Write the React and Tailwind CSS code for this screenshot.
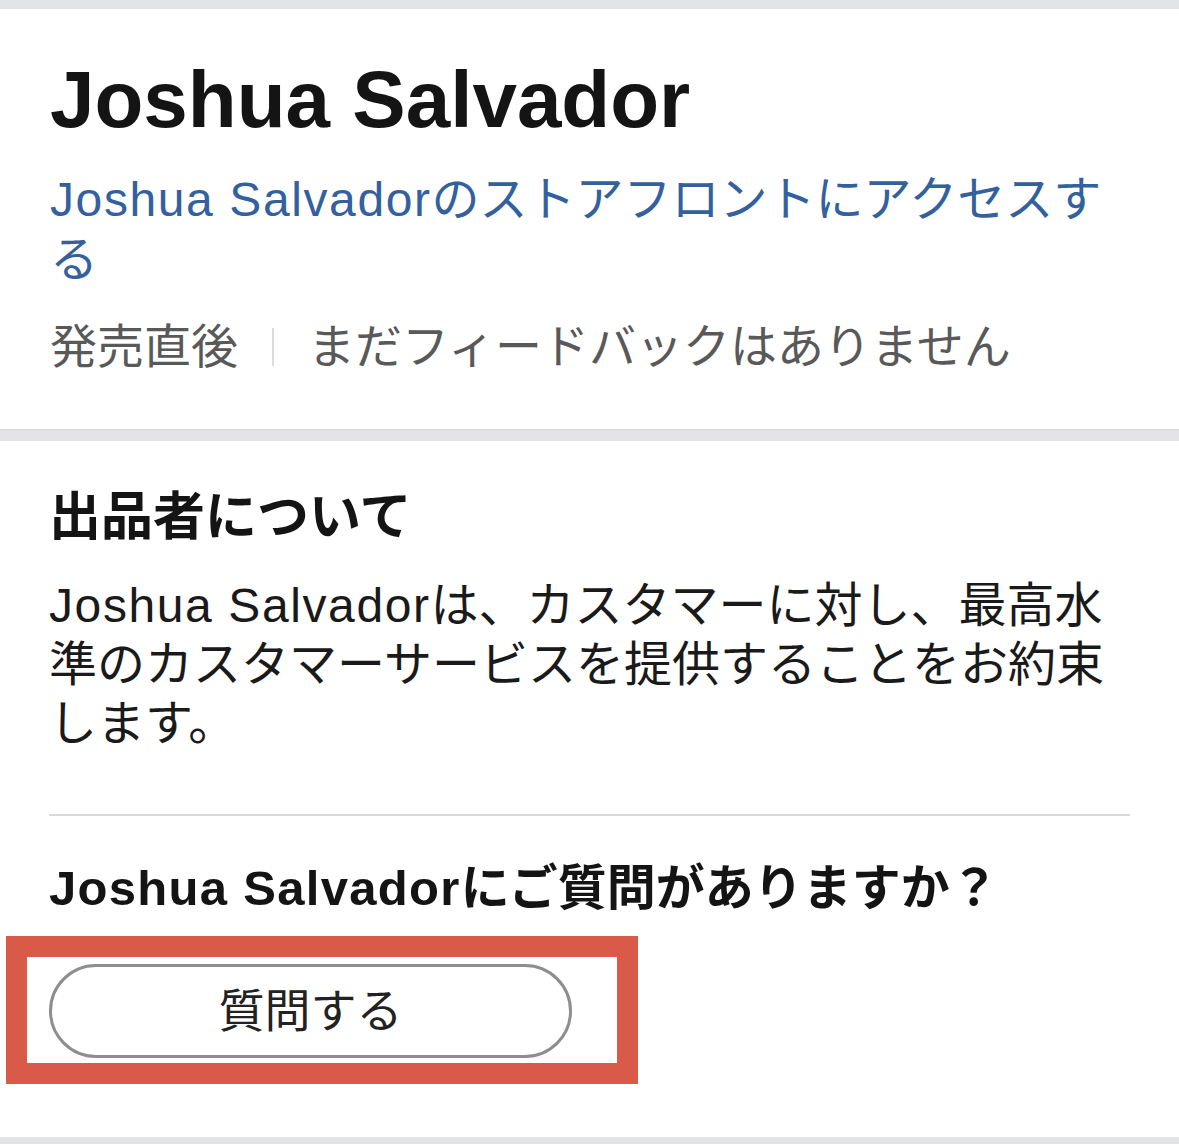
import React from 'react';

const font = "font-['Liberation_Sans','Noto_Sans_CJK_JP',sans-serif]";

const SellerCard = () => {
  return (
    <div className={`w-[1179px] min-h-[1144px] bg-white ${font}`}>
      {/* top band */}
      <div className="h-[9px] bg-[#e3e4e6]" />

      {/* seller header */}
      <div className="pl-[50px] pr-[49px] pt-[43px] pb-[52px]">
        <h1 className="text-[80px] leading-[96px] font-bold text-[#141414]">Joshua Salvador</h1>
        <a href="#" className="block mt-[22px] max-w-[1064px] text-[48px] leading-[60px] text-[#33619e]">
          <span className="tracking-[1.6px]">Joshua Salvador</span>のストアフロントにアクセスする
        </a>
        <div className="mt-[27px] flex items-center text-[47px] leading-[60px] text-[#595959]">
          <span>発売直後</span>
          <span className="mx-[34px] h-[38px] w-[2px] bg-[#dcdcdc]" />
          <span>まだフィードバックはありません</span>
        </div>
      </div>

      <div className="h-[12px] bg-[#e3e4e6] border-t border-[#d8d8da]" />

      {/* about seller */}
      <div className="pl-[49px] pr-[49px] pt-[44px] pb-[79px]">
        <h2 className="text-[52px] leading-[64px] font-bold text-[#141414]">出品者について</h2>
        <p className="mt-[27px] max-w-[1064px] text-[48px] leading-[59px] text-[#1a1a1a]">
          <span className="tracking-[1.6px]">Joshua Salvador</span>は、カスタマーに対し、最高水準のカスタマーサービスを提供することをお約束します。
        </p>
        <div className="mt-[61px] h-[2px] bg-[#d9d9d9]" />
        <h3 className="mt-[42px] text-[49px] leading-[60px] font-bold text-[#141414]">
          <span className="tracking-[1.3px]">Joshua Salvador</span>にご質問がありますか？
        </h3>
        <div className="relative mt-[46px] w-[523px]">
          <button className="flex h-[94px] w-full items-center justify-center rounded-full border-[3px] border-[#8e8e8e] bg-white text-[46px] text-[#222]">
            質問する
          </button>
          {/* annotation highlight */}
          <div className="pointer-events-none absolute -left-[43px] -right-[66px] -top-[28px] -bottom-[26px] border-[21px] border-[#d95a48]" />
        </div>
      </div>

      <div className="h-[20px] bg-[#e3e4e6]" />
    </div>
  );
};

export default function App() {
  return <SellerCard />;
}
